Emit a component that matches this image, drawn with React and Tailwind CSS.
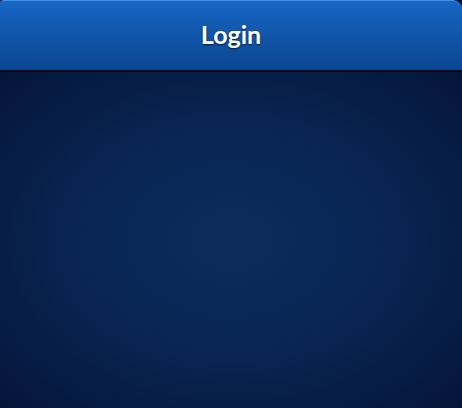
export default function App() {
  return (
    <div className="w-[462px] h-[408px] flex flex-col bg-[#041230] overflow-hidden" style={{ fontFamily: 'Lato, "Open Sans", sans-serif' }}>
      {/* Header */}
      <header className="h-[72px] shrink-0 flex items-center justify-center pb-[2px] rounded-tl-[4px] rounded-tr-[9px] border-t border-[#4a8ee0] bg-gradient-to-b from-[#1766c3] to-[#0b4690] border-b-2 border-b-[#020a1a]">
        <h1 className="text-[25px] font-bold text-white [text-shadow:0_1px_2px_rgba(0,0,0,0.7)]">Login</h1>
      </header>

      {/* Body */}
      <main className="flex-1 bg-[radial-gradient(ellipse_at_center,#0b2c5d_0%,#092654_45%,#051539_100%)]" />
    </div>
  )
}
